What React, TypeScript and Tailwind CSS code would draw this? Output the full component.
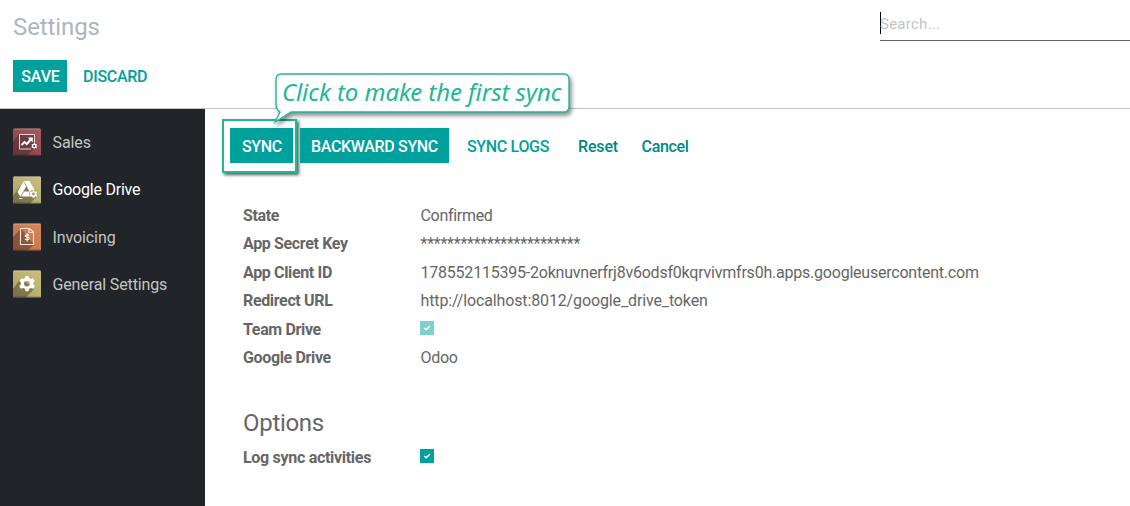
import type { ReactNode } from "react";

function Tile({ from, to, shade, children }: { from: string; to: string; shade: string; children: ReactNode }) {
  const id = "tile" + from.slice(1) + shade.length;
  return (
    <svg className="h-7 w-7 shrink-0" viewBox="0 0 28 28" fill="none">
      <defs>
        <linearGradient id={id} x1="1" y1="0" x2="0" y2="1">
          <stop stopColor={from} />
          <stop offset="1" stopColor={to} />
        </linearGradient>
      </defs>
      <rect y="0.5" width="28" height="27" rx="1" fill={`url(#${id})`} />
      <path d={shade} fill="#2b2320" fillOpacity="0.38" />
      <path d="M1 1h26" stroke="#fff" strokeOpacity="0.3" />
      <path d="M1 27h26" stroke="#000" strokeOpacity="0.25" />
      {children}
    </svg>
  );
}

const gear =
  "M-1.3-7h2.6l.5 2 1.5.8 2-.7 1.8 2.2-1.4 1.6v2l1.5 1.5-1.6 2.3-2.1-.6-1.6.9-.6 2h-2.6l-.5-2-1.6-.9-2.1.6-1.5-2.3 1.4-1.5v-2L-7-2.700l1.700-2.200 2 .7 1.500-.8zM2.700 0a2.700 2.700 0 1 0-5.400 0a2.700 2.700 0 1 0 5.400 0z";

function SalesIcon() {
  return (
    <Tile from="#a85860" to="#854247" shade="M0 14L6 6h16v14l-8 7.500H0z">
      <path d="M18 21H6.500V6.500h15V16" stroke="#e8d5d5" strokeWidth="1" />
      <path d="M8.500 17l3-3 2.300 2 4-4.500" stroke="#fff" strokeWidth="2" />
      <path d="M14.800 9.500h5v5z" fill="#fff" />
      <path transform="translate(21.200 18) scale(.4)" d={gear} fill="#fff" fillRule="evenodd" />
    </Tile>
  );
}

function DriveIcon() {
  return (
    <Tile from="#c9bf82" to="#aca063" shade="M0 20L10 6l15 13-8 8.500H0z">
      <path d="M11 5h5.500l7 12.500h-6z" fill="#fff" />
      <path d="M10.300 5.500L4.500 16l2.800 4.700L13.200 10.500z" fill="#fff" />
      <path d="M11 15.500h7v5H8.200z" fill="#fff" />
      <path d="M6 22.500h3.500" stroke="#fff" strokeOpacity=".8" />
      <circle cx="20.500" cy="18" r="4.200" fill="#a69b64" />
      <path transform="translate(20.500 18) scale(.55)" d={gear} fill="#fff" fillRule="evenodd" />
    </Tile>
  );
}

function InvoiceIcon() {
  return (
    <Tile from="#d98758" to="#bf7048" shade="M0 14L8 5.500l13 16-6 6H0z">
      <path d="M7.500 5.500h9l4 3.500v12.500h-13zM16 5.500v4h4.500" stroke="#f7e5da" strokeWidth="1.100" />
      <path d="M16.200 12.400c-.5-.8-3.900-1.100-4.100.4-.2 1.700 4.100.8 4.100 2.700 0 1.700-3.500 1.600-4.300.5M14.100 10.500v8" stroke="#fff" strokeWidth="1.100" />
    </Tile>
  );
}

function GeneralIcon() {
  return (
    <Tile from="#c9c07e" to="#aca35e" shade="M0 19L8 8l13 11-8 8.500H0z">
      <path transform="translate(14 13.600) scale(1.100)" d={gear} fill="#fff" fillRule="evenodd" />
    </Tile>
  );
}

const menu = [
  { label: "Sales", icon: <SalesIcon />, style: "text-[#c3c5c6] tracking-[-0.1px]" },
  { label: "Google Drive", icon: <DriveIcon />, style: "text-white tracking-[-0.22px]" },
  { label: "Invoicing", icon: <InvoiceIcon />, style: "text-[#c3c5c6] tracking-[-0.1px]" },
  { label: "General Settings", icon: <GeneralIcon />, style: "text-[#c3c5c6] tracking-[-0.13px]" },
];

function Check({ style }: { style: string }) {
  return (
    <span className={`flex h-3.5 w-3.5 items-center justify-center ${style}`}>
      <svg className="h-2 w-2" viewBox="0 0 8 8" fill="none">
        <path d="M1.200 4l1.900 1.800 3.700-3.600" stroke="#fff" strokeWidth="1.500" />
      </svg>
    </span>
  );
}

const fields: { label: string; value: ReactNode; style: string }[] = [
  { label: "State", value: "Confirmed", style: "tracking-[-0.3px]" },
  { label: "App Secret Key", value: "************************", style: "tracking-[-0.24px]" },
  {
    label: "App Client ID",
    value: "178552115395-2oknuvnerfrj8v6odsf0kqrvivmfrs0h.apps.googleusercontent.com",
    style: "tracking-[-0.22px]",
  },
  { label: "Redirect URL", value: "http://localhost:8012/google_drive_token", style: "tracking-[-0.13px]" },
  { label: "Team Drive", value: <Check style="bg-[#7fd0cd]" />, style: "-mt-[4px] -ml-[0.5px]" },
  { label: "Google Drive", value: "Odoo", style: "tracking-[-0.3px]" },
];

export default function App() {
  return (
    <div className="relative flex h-[506px] w-[1130px] flex-col overflow-hidden bg-white font-['Roboto',sans-serif] text-base whitespace-nowrap text-[#666]">
      <header className="flex h-[109px] shrink-0 justify-between border-b border-[#c5c5c5]">
        <div className="pl-[13px]">
          <h1 className="mt-[9px] h-9 text-2xl leading-9 tracking-[-0.1px] text-[#adb5bd]">Settings</h1>
          <div className="mt-[15px] flex h-8 font-medium">
            <button className="w-[54px] bg-[#00a09d] pt-px pl-px tracking-[-0.1px] text-white">SAVE</button>
            <button className="ml-4 pt-px tracking-[-0.3px] text-[#00a09d]">DISCARD</button>
          </div>
        </div>
        <div className="mt-3 flex h-[29px] w-[250px] border-b border-[#5c636a]">
          <span className="h-[22px] w-px bg-black" />
          <span className="-ml-px text-[15px] leading-6 tracking-[0.25px] text-[#c4c4c4]">Search...</span>
        </div>
      </header>

      <div className="flex min-h-0 flex-1">
        <nav className="w-[205px] shrink-0 bg-[#212529] pt-[9.500px]">
          {menu.map((item) => (
            <div key={item.label} className={`flex h-[47.400px] items-center gap-[11.500px] pl-[13px] ${item.style}`}>
              {item.icon}
              <span className="pt-[1.500px]">{item.label}</span>
            </div>
          ))}
        </nav>

        <main className="flex-1">
          <div className="flex h-[66px] items-start pt-[10px] pl-[17px] font-medium tracking-[-0.33px]">
            <div className="flex h-[54px] w-[75px] shrink-0 border-2 border-[#22b795] pt-[7px] pl-1.5 shadow-[2px_2px_3px_rgba(0,0,0,0.65)]">
              <button className="h-[35px] w-[63px] bg-[#00a09d] pt-0.5 pl-px text-white">SYNC</button>
            </div>
            <button className="mt-[9px] ml-[3px] h-[35px] w-[149px] bg-[#00a09d] pt-0.5 text-white">BACKWARD SYNC</button>
            <button className="mt-[9px] ml-[18px] h-[35px] pt-0.5 text-[#00a09d]">SYNC LOGS</button>
            <button className="mt-[9px] ml-[29px] h-[35px] pt-0.5 tracking-[-0.15px] text-[#008784]">Reset</button>
            <button className="mt-[9px] ml-[23.500px] h-[35px] pt-0.5 text-[#008784]">Cancel</button>
          </div>

          <dl className="mt-[26.500px] pl-[38px]">
            {fields.map((field) => (
              <div key={field.label} className="flex h-[28.500px] items-center">
                <dt className="w-[177.500px] font-bold tracking-[-0.35px]">{field.label}</dt>
                <dd className={field.style}>{field.value}</dd>
              </div>
            ))}
          </dl>

          <section className="mt-[32px] pl-[38px]">
            <h2 className="h-9 text-2xl leading-9 tracking-[-0.3px]">Options</h2>
            <div className="mt-[3px] flex h-7 items-center">
              <span className="w-[177px] font-bold tracking-[-0.3px]">Log sync activities</span>
              <Check style="bg-[#00a09d] -mt-[3px]" />
            </div>
          </section>
        </main>
      </div>

      <div className="absolute top-[68px] left-[268px] h-[64px] w-[312px]">
        <svg className="absolute inset-0 overflow-visible drop-shadow-[2px_3px_2px_rgba(0,0,0,0.45)]" viewBox="0 0 312 64" fill="none">
          <path
            d="M13.500 6H296Q301 6 301 12V38Q301 44 296 44H23L7 54L12 44Q8 41 8 36V12Q8 6 13.500 6Z"
            fill="#fff"
            stroke="#22b795"
            strokeWidth="1.400"
          />
        </svg>
        <span className="absolute top-[7px] left-[14px] font-['Noto_Sans',sans-serif] text-2xl leading-[34px] tracking-[-0.08px] text-[#22b795] italic">
          Click to make the first sync
        </span>
      </div>
    </div>
  );
}
